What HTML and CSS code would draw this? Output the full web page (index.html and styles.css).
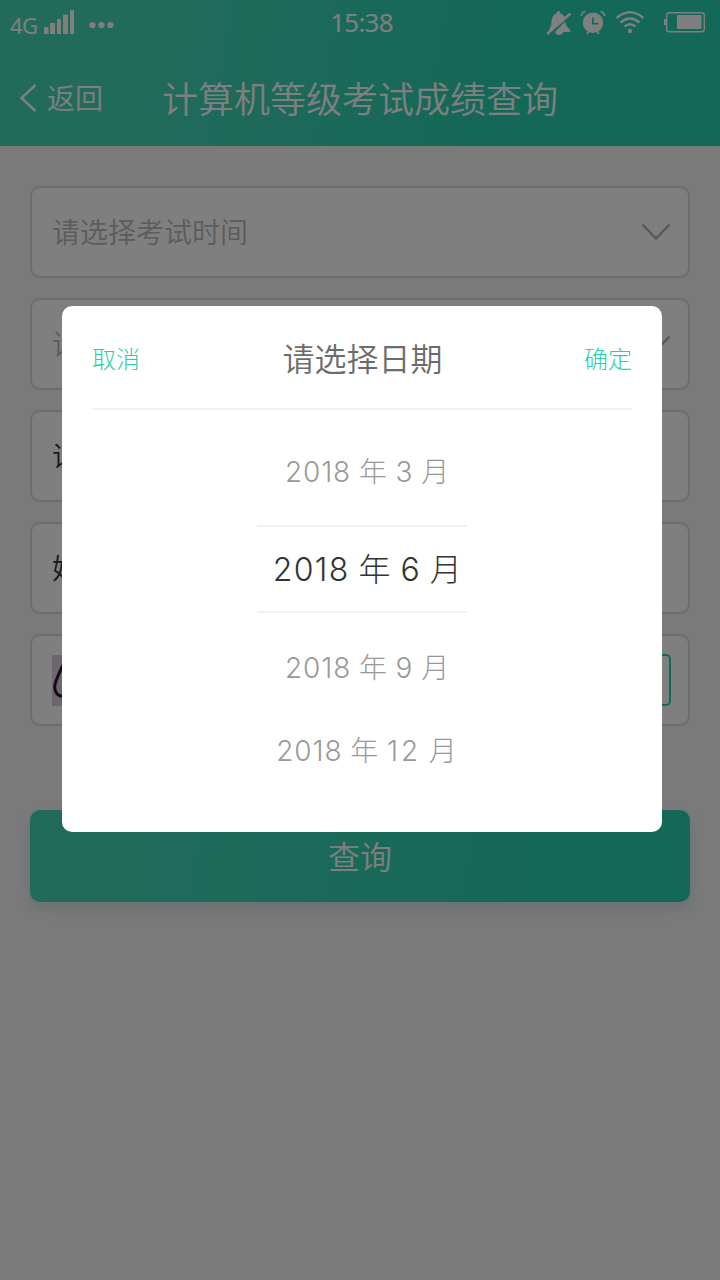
FILE: index.html
```html
<!DOCTYPE html>
<html lang="zh-CN">
<head>
<meta charset="utf-8">
<title>计算机等级考试成绩查询</title>
<link rel="stylesheet" href="styles.css">
</head>
<body>
<div class="screen">
  <header class="header">
    <div class="status">
      <div class="status-left">
        <span class="network">4G</span>
        <svg class="signal" width="31" height="26" viewBox="0 0 31 26"><path d="M0 18h4.500v7H0zM6 14h5v11H6zM13 10h4v15h-4zM19 5.500h5V25h-5zM26 1h4v24h-4z"/></svg>
        <svg class="dots" width="26" height="8" viewBox="0 0 26 8"><circle cx="3.500" cy="4" r="3.100"/><circle cx="12.500" cy="4" r="3.100"/><circle cx="21.500" cy="4" r="3.100"/></svg>
      </div>
      <span class="clock">15:38</span>
      <div class="status-right">
        <svg width="26" height="26" viewBox="0 0 26 26"><path d="M3 20.500Q5.500 17.500 5.500 12.500Q6 5.500 11 4V2.500q1.500-1 3 0V4Q17.500 5 19 8.500L5 21.500z"/><path d="M19 12.500Q19.500 16.500 22 18.500Q24.500 20.500 24.500 23H17.500q-1.500 3-4.500 3t-4-3z"/><path class="line" d="M1 25L24.500 4.500" stroke-width="2.600"/></svg>
        <svg width="26" height="26" viewBox="0 0 26 26"><path fill-rule="evenodd" d="M13 3.500a10.200 10.200 0 1 1 0 20.400a10.200 10.200 0 1 1 0-20.400zM12 8.500v7h6.500v-1.800h-4.700V8.500z"/><path class="line" d="M1.500 7q0-4 4-4.500M24.500 7q0-4-4-4.500M9 22l-2 3M17 22l2 3" stroke-width="1.700"/></svg>
        <svg width="30" height="26" viewBox="0 0 30 26"><path class="line" d="M1.500 9q13.500-11.500 27 0M5.500 13.500q9.500-8 19 0M9.500 17.500q5.500-4.500 11 0" stroke-width="2.300"/><circle cx="15" cy="22" r="2.200"/></svg>
        <svg class="battery" width="42" height="26" viewBox="0 0 42 26"><rect class="line" x="2.700" y="3.700" width="37.600" height="19" rx="2.500" stroke-width="1.400"/><path d="M0 10h2v6H0zM13 6h24.500v14H13z"/></svg>
      </div>
    </div>
    <div class="nav">
      <a class="back"><svg width="17" height="28" viewBox="0 0 17 28"><path class="line" d="M15.500 1L1.500 14l14 13" stroke-width="2.400"/></svg><span>返回</span></a>
      <h1 class="title">计算机等级考试成绩查询</h1>
    </div>
  </header>
  <main class="form">
    <div class="field placeholder"><span>请选择考试时间</span><svg class="chevron" width="30" height="18" viewBox="0 0 30 18"><path d="M1.500 1.500L15 15.500L28.500 1.500"/></svg></div>
    <div class="field placeholder"><span>请</span><svg class="chevron" width="30" height="18" viewBox="0 0 30 18"><path d="M1.500 1.500L15 15.500L28.500 1.500"/></svg></div>
    <div class="field"><span>证</span></div>
    <div class="field"><span>姓</span></div>
    <div class="field captcha-row">
      <svg class="captcha" width="120" height="51" viewBox="0 0 120 51"><path d="M11 10Q7 18 4 26T5 39q4 4 10 1"/></svg>
      <div class="refresh"></div>
    </div>
    <button class="submit">查询</button>
  </main>
  <div class="overlay">
    <section class="dialog">
      <div class="dialog-head"><a class="action">取消</a><h2 class="dialog-title">请选择日期</h2><a class="action">确定</a></div>
      <div class="picker">
        <div class="option">2018 年 3 月</div>
        <div class="option selected">2018 年 6 月</div>
        <div class="option">2018 年 9 月</div>
        <div class="option last">2018 年 <span class="wide">12</span> 月</div>
      </div>
    </section>
  </div>
</div>
</body>
</html>
```
FILE: styles.css
```css
* { box-sizing: border-box; }
body { margin: 0; font-family: "Noto Sans CJK SC", sans-serif; font-weight: 350; }
h1, h2 { margin: 0; font-weight: 350; }
svg { display: block; flex: none; }
.screen { position: relative; width: 720px; height: 1280px; overflow: hidden; background: #f4f4f7; }
.header { height: 146px; color: #fff; background: linear-gradient(100deg, #44d6b6 20%, #28d0ae 70%); }
.header svg { fill: #fff; }
.header .line { fill: none; stroke: #fff; }
.status { display: grid; grid-template-columns: 1fr auto 1fr; height: 50px; font-family: "Noto Sans", sans-serif; font-weight: 400; }
.status-left { display: flex; align-items: flex-start; padding: 9px 0 0 10px; }
.network { width: 34px; font-size: 22px; line-height: 32px; letter-spacing: -0.5px; }
.dots { margin: 12px 0 0 14px; }
.clock { padding-left: 3px; font-size: 26px; line-height: 45px; letter-spacing: -0.8px; }
.status-right { display: flex; justify-content: flex-end; padding: 9px 14px 0 0; gap: 9px; }
.status-right svg:first-child { margin-right: -1px; }
.battery { margin-left: 10px; }
.nav { display: flex; align-items: center; height: 96px; padding-left: 20px; }
.back { display: flex; align-items: center; gap: 10px; width: 142px; font-size: 28px; line-height: 96px; }
.back span, .title, .field span { margin-bottom: 2px; }
.title { font-size: 36px; line-height: 94px; white-space: nowrap; }
.form { display: flex; flex-direction: column; gap: 20px; padding: 40px 30px; }
.field { display: flex; align-items: center; justify-content: space-between; height: 92px; padding: 0 17px 0 20px; border: 2px solid #dadadc; border-radius: 10px; background: #fff; color: #333; font-size: 28px; }
.placeholder { color: #b8b8b8; }
.chevron { fill: none; stroke: #b0b0b0; stroke-width: 2.4; }
.captcha { background: #d8cddb; fill: none; stroke: #360c34; stroke-width: 3; }
.refresh { width: 130px; height: 52px; border: 2px solid #28d0ae; border-radius: 5px; }
.submit { height: 92px; margin-top: 64px; padding: 0 0 2px; border: 0; border-radius: 10px; color: #fff; background: linear-gradient(100deg, #44d6b6 10%, #28d0ae 80%); box-shadow: 0 6px 14px rgba(40, 110, 130, .15); font: 350 32px/90px "Noto Sans CJK SC", sans-serif; }
.overlay { position: absolute; inset: 0; padding: 306px 58px 0 62px; background: rgba(0, 0, 0, .5); }
.dialog { height: 526px; padding: 0 30px; border-radius: 10px; background: #fff; }
.dialog-head { display: flex; align-items: center; justify-content: space-between; height: 104px; border-bottom: 2px solid #f1f1f1; }
.dialog-title { padding-left: 1px; color: #6c6c6c; font-size: 32px; line-height: 102px; }
.action { padding-top: 2px; color: #28d0ae; font-size: 24px; font-weight: 300; line-height: 102px; }
.picker { display: flex; flex-direction: column; align-items: center; padding-top: 21px; }
.option { width: 210px; height: 83px; padding-left: 11px; color: #999; text-align: center; white-space: nowrap; font-family: Inter, "Noto Sans CJK SC", sans-serif; font-weight: 300; font-size: 28px; line-height: 83px; letter-spacing: 0.9px; word-spacing: -1px; }
.selected { height: 88px; margin: 11px 0 14px; padding-left: 12px; border-top: 2px solid #f1f1f1; border-bottom: 2px solid #f1f1f1; color: #333; font-size: 32px; line-height: 85px; letter-spacing: 1.3px; word-spacing: -1.5px; }
.last { padding-left: 10px; }
.wide { letter-spacing: 3px; }
```
